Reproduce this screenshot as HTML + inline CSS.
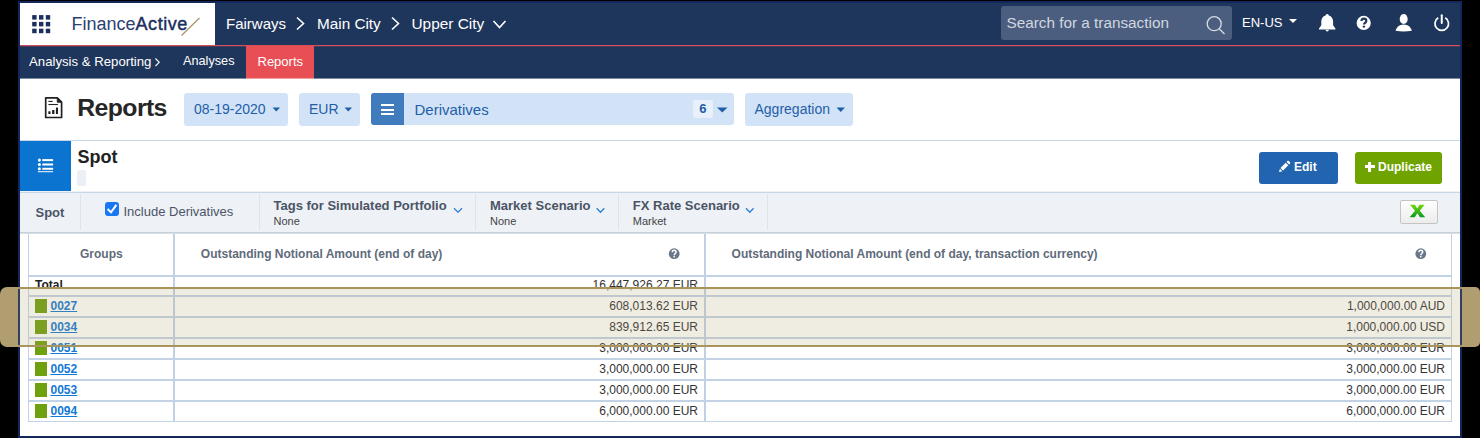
<!DOCTYPE html>
<html><head><meta charset="utf-8">
<style>
*{box-sizing:border-box;margin:0;padding:0}
html,body{width:1480px;height:438px;overflow:hidden;background:#000;font-family:"Liberation Sans",sans-serif}
.a{position:absolute}
.t{position:absolute;white-space:nowrap;line-height:1}
svg{position:absolute;overflow:visible}
</style></head><body>
<!-- frame -->
<div class="a" style="left:18px;top:1px;width:1444px;height:437px;background:#13275a"></div>
<div class="a" style="left:20px;top:3px;width:1440px;height:433px;background:#fff"></div>
<div class="a" style="left:215px;top:3px;width:1245px;height:42px;background:#1f365c"></div>
<div class="a" style="left:20px;top:46px;width:1440px;height:32px;background:#1f365c"></div>
<div class="a" style="left:20px;top:78px;width:1440px;height:1px;background:#7d8ba0"></div>
<div class="a" style="left:20px;top:45px;width:1440px;height:1px;background:#d4505a"></div>
<div class="a" style="left:20px;top:46px;width:1440px;height:1px;background:#4a3a5c"></div>

<!-- top header -->
<!-- grid icon -->
<svg style="left:0;top:0" width="60" height="45">
 <g fill="#1b2f5e">
  <rect x="32.2" y="15.1" width="4.4" height="4.5"/><rect x="39" y="15.1" width="4.4" height="4.5"/><rect x="45.8" y="15.1" width="4.4" height="4.5"/>
  <rect x="32.2" y="21.9" width="4.4" height="4.5"/><rect x="39" y="21.9" width="4.4" height="4.5"/><rect x="45.8" y="21.9" width="4.4" height="4.5"/>
  <rect x="32.2" y="28.7" width="4.4" height="4.5"/><rect x="39" y="28.7" width="4.4" height="4.5"/><rect x="45.8" y="28.7" width="4.4" height="4.5"/>
 </g>
</svg>
<div class="t" style="left:71.5px;top:14.8px;font-size:18px;color:#2a4173">Finance<span style="color:#1b2f5e;-webkit-text-stroke:0.45px #1b2f5e;letter-spacing:0.55px">Active</span></div>
<svg style="left:0;top:0" width="215" height="45"><line x1="181.5" y1="35.5" x2="199.5" y2="18" stroke="#a89466" stroke-width="1.2"/></svg>

<div class="t" style="left:226px;top:15.9px;font-size:15px;color:#fff">Fairways</div>
<svg style="left:0;top:0" width="520" height="45" fill="none" stroke="#fff" stroke-width="1.6">
 <polyline points="297,17.5 303.5,23.5 297,29.5"/>
 <polyline points="392,17.5 398.5,23.5 392,29.5"/>
 <polyline points="493.5,21 499.5,27.5 505.5,21"/>
</svg>
<div class="t" style="left:317px;top:15.7px;font-size:15.3px;color:#fff">Main City</div>
<div class="t" style="left:411.5px;top:15.7px;font-size:15.4px;color:#fff">Upper City</div>

<!-- search -->
<div class="a" style="left:1001px;top:6px;width:231px;height:34px;background:#4b5e80;border-radius:3px"></div>
<div class="t" style="left:1006.5px;top:15.2px;font-size:15.3px;color:#d2d7df">Search for a transaction</div>
<svg style="left:0;top:0" width="1240" height="45" fill="none" stroke="#d9dde3" stroke-width="1.3">
 <circle cx="1214.2" cy="23.7" r="7"/><line x1="1219.2" y1="28.7" x2="1224.5" y2="34"/>
</svg>
<div class="t" style="left:1242px;top:16px;font-size:13px;color:#fff">EN-US</div>
<svg style="left:0;top:0" width="1480" height="45" fill="#fff">
 <polygon points="1289,19 1297,19 1293,23"/>
 <!-- bell -->
 <path d="M1327.2 14c1 0 1.6.8 1.6 1.5 2.8.7 4.3 3.2 4.3 6.2v3.6l2.3 3.3v.9h-16.4v-.9l2.3-3.3v-3.6c0-3 1.5-5.5 4.3-6.2 0-.7.6-1.5 1.6-1.5z"/>
 <path d="M1325.6 29.8h3.2a1.6 1.6 0 0 1-3.2 0z"/>
 <!-- question -->
 <circle cx="1363.7" cy="22.9" r="7.1"/>
 <!-- user -->
 <ellipse cx="1403.7" cy="19" rx="4" ry="5.1"/>
 <path d="M1395.6 30.8c.6-3.6 4-6.4 8.1-6.4s7.5 2.8 8.1 6.4c-2.4.5-5.2.8-8.1.8s-5.7-.3-8.1-.8z"/>
</svg>
<svg style="left:0;top:0" width="1480" height="45" fill="none" stroke="#1f365c" stroke-width="2.2">
 <path d="M1361.5 21.1c0-1.5 1-2.4 2.4-2.4s2.4.9 2.4 2.2c0 1.8-2.3 1.9-2.3 3.5v.2"/>
</svg>
<svg style="left:0;top:0" width="1480" height="45" fill="#1f365c"><circle cx="1363.9" cy="26.6" r="1.2"/></svg>
<svg style="left:0;top:0" width="1480" height="45" fill="none" stroke="#fff" stroke-width="1.8">
 <path d="M1438.25 17.8A6.8 6.8 0 1 0 1445.25 17.8" stroke-width="1.7"/>
 <line x1="1441.75" y1="15.2" x2="1441.75" y2="23" stroke-width="2" stroke-linecap="round"/>
</svg>

<!-- nav bar -->
<div class="t" style="left:29px;top:55px;font-size:13.2px;color:#fff">Analysis &amp; Reporting</div>
<svg style="left:0;top:0" width="200" height="80" fill="none" stroke="#fff" stroke-width="1.1"><polyline points="155.5,58.5 159.2,62.3 155.5,66"/></svg>
<div class="t" style="left:183px;top:55.3px;font-size:12.7px;color:#fff">Analyses</div>
<div class="a" style="left:246px;top:46px;width:68px;height:32px;background:#e84f55"></div>
<div class="a" style="left:246px;top:78px;width:68px;height:1px;background:#f2a0a3"></div>
<div class="t" style="left:257.5px;top:55px;font-size:13px;color:#fff">Reports</div>


<!-- title bar -->
<svg style="left:0;top:0" width="70" height="125" fill="none" stroke="#222" stroke-width="1.7">
 <path d="M45.7 97.9h11.6l4.3 4.3v15.3h-15.9z" stroke-linejoin="round"/>
 <path d="M57.3 98v4.2h4.2z" fill="#222" stroke-width="1"/>
 <line x1="48.4" y1="101.4" x2="52.7" y2="101.4" stroke-width="1.1"/>
 <line x1="48.4" y1="104.5" x2="57.9" y2="104.5" stroke-width="1.1"/>
 <g fill="#222" stroke="none"><rect x="48.3" y="111.2" width="2.2" height="2.7" rx=".5"/><rect x="52.1" y="110" width="2.3" height="3.9" rx=".5"/><rect x="55.9" y="107.4" width="2.1" height="6.5" rx=".5"/></g>
</svg>
<div class="t" style="left:77.3px;top:95.6px;font-size:24.8px;font-weight:700;color:#262626;letter-spacing:-0.6px">Reports</div>

<div class="a" style="left:184px;top:93px;width:104px;height:33px;background:#d3e3f7;border-radius:3px"></div>
<div class="t" style="left:194px;top:102px;font-size:14px;color:#1f5ea8">08-19-2020</div>
<div class="a" style="left:299px;top:93px;width:61px;height:33px;background:#d3e3f7;border-radius:3px"></div>
<div class="t" style="left:309px;top:102px;font-size:14px;color:#1f5ea8">EUR</div>
<div class="a" style="left:371px;top:93px;width:363px;height:32px;background:#d3e3f7;border-radius:3px"></div>
<div class="a" style="left:371px;top:93px;width:33px;height:32px;background:#3f7bbd;border-radius:3px 0 0 3px"></div>
<div class="a" style="left:381px;top:104px;width:13px;height:2.2px;background:#fff"></div>
<div class="a" style="left:381px;top:108.5px;width:13px;height:2.2px;background:#fff"></div>
<div class="a" style="left:381px;top:113px;width:13px;height:2.2px;background:#fff"></div>
<div class="t" style="left:414.5px;top:102px;font-size:15px;color:#1f5ea8">Derivatives</div>
<div class="a" style="left:693px;top:100px;width:20px;height:18px;background:#e8f0fb;border-radius:2px"></div>
<div class="t" style="left:699.3px;top:101.6px;font-size:13px;font-weight:700;color:#1f5ea8">6</div>
<div class="a" style="left:745px;top:93px;width:108px;height:33px;background:#d3e3f7;border-radius:3px"></div>
<div class="t" style="left:754.5px;top:102px;font-size:14px;color:#1f5ea8">Aggregation</div>
<svg style="left:0;top:0" width="860" height="125" fill="#1f5ea8">
 <polygon points="272.5,107.5 280,107.5 276.25,111.5"/>
 <polygon points="344.5,107.5 352,107.5 348.25,111.5"/>
 <polygon points="717,107.5 727.5,107.5 722.25,112.5"/>
 <polygon points="836.5,107.5 845,107.5 840.75,112"/>
</svg>
<div class="a" style="left:20px;top:140px;width:1440px;height:1px;background:#c8d7e8"></div>

<!-- spot header -->
<div class="a" style="left:20px;top:141px;width:51px;height:50px;background:#0a74d0"></div>
<svg style="left:0;top:0" width="70" height="190" fill="#fff">
 <circle cx="39.4" cy="160.1" r="1.55"/><circle cx="39.4" cy="164.5" r="1.55"/><circle cx="39.4" cy="168.8" r="1.55"/>
 <rect x="42.3" y="159.1" width="10.8" height="2"/><rect x="42.3" y="163.5" width="10.8" height="2"/><rect x="42.3" y="167.8" width="10.8" height="2"/>
 <rect x="37.9" y="171.2" width="15.2" height="1"/>
</svg>
<div class="t" style="left:77.5px;top:147.9px;font-size:18px;font-weight:700;color:#222">Spot</div>
<div class="a" style="left:77px;top:170px;width:9px;height:16px;background:#eceff5;border-radius:2px"></div>
<div class="a" style="left:1259px;top:152px;width:79px;height:32px;background:#2264b0;border-radius:3px"></div>
<svg style="left:0;top:0" width="1300" height="190" fill="#fff">
 <path d="M1280.5 167.9l5.2-5.2 2.6 2.6-5.2 5.2z M1279.9 168.7l2.5 2.5-3.4.9z M1286.5 162l.9-.9c.4-.4 1-.4 1.4 0l1.2 1.2c.4.4.4 1 0 1.4l-.9.9z"/>
</svg>
<div class="t" style="left:1294px;top:160.8px;font-size:12px;font-weight:700;color:#fff">Edit</div>
<div class="a" style="left:1355px;top:152px;width:87px;height:32px;background:#6ea300;border-radius:3px"></div>
<div class="a" style="left:1365px;top:165.3px;width:9.5px;height:2.8px;background:#fff"></div>
<div class="a" style="left:1368.3px;top:162px;width:2.8px;height:9.5px;background:#fff"></div>
<div class="t" style="left:1378px;top:160.8px;font-size:12px;font-weight:700;color:#fff">Duplicate</div>

<!-- filter bar -->
<div class="a" style="left:20px;top:191px;width:1440px;height:42px;background:#eef1f6"></div>
<div class="a" style="left:20px;top:191.5px;width:1440px;height:1px;background:#c8d7e8"></div>
<div class="a" style="left:20px;top:232px;width:1440px;height:1px;background:#c3d2df"></div>
<div class="a" style="left:20px;top:233px;width:1440px;height:1px;background:#dcdddf"></div>
<div class="a" style="left:80px;top:194px;width:1px;height:35.5px;background:#e0e3e8"></div>
<div class="a" style="left:259px;top:194px;width:1px;height:35.5px;background:#e0e3e8"></div>
<div class="a" style="left:475px;top:194px;width:1px;height:35.5px;background:#e0e3e8"></div>
<div class="a" style="left:618px;top:194px;width:1px;height:35.5px;background:#e0e3e8"></div>
<div class="a" style="left:767px;top:194px;width:1px;height:35.5px;background:#e0e3e8"></div>
<div class="t" style="left:35.5px;top:206.2px;font-size:13px;font-weight:700;color:#4a5566">Spot</div>
<div class="a" style="left:105px;top:202px;width:14px;height:14px;background:#1877f2;border-radius:3px"></div>
<svg style="left:0;top:0" width="130" height="220" fill="none" stroke="#fff" stroke-width="2"><polyline points="107.6,209 111,212.3 116.4,204.8"/></svg>
<div class="t" style="left:123.5px;top:204.7px;font-size:13px;color:#4a5566">Include Derivatives</div>
<div class="t" style="left:273.5px;top:198.7px;font-size:13px;font-weight:700;color:#4a5566">Tags for Simulated Portfolio</div>
<div class="t" style="left:273.5px;top:215.5px;font-size:11px;color:#444">None</div>
<div class="t" style="left:490px;top:198.7px;font-size:13px;font-weight:700;color:#4a5566">Market Scenario</div>
<div class="t" style="left:490px;top:215.5px;font-size:11px;color:#444">None</div>
<div class="t" style="left:632.8px;top:198.7px;font-size:13px;font-weight:700;color:#4a5566">FX Rate Scenario</div>
<div class="t" style="left:632.8px;top:215.5px;font-size:11px;color:#444">Market</div>
<svg style="left:0;top:0" width="800" height="230" fill="none" stroke="#2a7fd4" stroke-width="1.3">
 <polyline points="454,208.3 458,212.2 462,208.3"/>
 <polyline points="596.7,208.3 600.5,212.2 604.3,208.3"/>
 <polyline points="746,208.3 749.8,212.2 753.6,208.3"/>
</svg>
<div class="a" style="left:1400px;top:200px;width:38px;height:23.5px;background:linear-gradient(#fff,#ececec);border:1px solid #c4c4c4;border-radius:2px"></div>
<svg style="left:0;top:0" width="1450" height="230">
 <defs><linearGradient id="xg" x1="0" y1="0" x2="0" y2="1"><stop offset="0" stop-color="#72d80c"/><stop offset="1" stop-color="#0c9a22"/></linearGradient></defs>
 <path d="M1410 204.8h5l2.2 3.6 2.2-3.6h5.2l-4.8 6 5.4 6.4h-5.2l-2.6-4-2.6 4h-5.2l5.4-6.4z" fill="url(#xg)"/>
</svg>


<!-- table -->
<div class="a" style="left:28px;top:234px;width:1.3px;height:188px;background:#c5d3e3"></div>
<div class="a" style="left:1451px;top:234px;width:1.3px;height:188px;background:#c5d3e3"></div>
<div class="a" style="left:173px;top:234px;width:2px;height:188px;background:#c0d1e5"></div>
<div class="a" style="left:704px;top:234px;width:2px;height:188px;background:#c0d1e5"></div>
<div class="a" style="left:28px;top:275px;width:1424px;height:1.6px;background:#c3d3e6"></div>
<div class="a" style="left:28px;top:295px;width:1424px;height:1.6px;background:#c3d3e6"></div>
<div class="a" style="left:28px;top:316px;width:1424px;height:1.6px;background:#c3d3e6"></div>
<div class="a" style="left:28px;top:337px;width:1424px;height:1.6px;background:#c3d3e6"></div>
<div class="a" style="left:28px;top:358px;width:1424px;height:1.6px;background:#c3d3e6"></div>
<div class="a" style="left:28px;top:379px;width:1424px;height:1.6px;background:#c3d3e6"></div>
<div class="a" style="left:28px;top:400px;width:1424px;height:1.6px;background:#c3d3e6"></div>
<div class="a" style="left:28px;top:420.5px;width:1424px;height:1.6px;background:#c3d3e6"></div>
<div class="t" style="left:80px;top:247.8px;font-size:12px;font-weight:700;color:#5f6b7a">Groups</div>
<div class="t" style="left:200.8px;top:248.1px;font-size:12px;font-weight:700;color:#5f6b7a">Outstanding Notional Amount (end of day)</div>
<div class="t" style="left:731.6px;top:248.1px;font-size:12px;font-weight:700;color:#5f6b7a">Outstanding Notional Amount (end of day, transaction currency)</div>
<svg style="left:0;top:0" width="1480" height="270"><circle cx="674.2" cy="253.7" r="5.4" fill="#69778a"/><path d="M672.30 252.3c0-1.2.8-2 1.9-2s1.9.7 1.9 1.8c0 1.4-1.8 1.4-1.8 2.9v.3" fill="none" stroke="#fff" stroke-width="1.5"/><circle cx="674.20" cy="256.6" r="0.85" fill="#fff"/></svg>
<svg style="left:0;top:0" width="1480" height="270"><circle cx="1420.8" cy="253.7" r="5.4" fill="#69778a"/><path d="M1418.90 252.3c0-1.2.8-2 1.9-2s1.9.7 1.9 1.8c0 1.4-1.8 1.4-1.8 2.9v.3" fill="none" stroke="#fff" stroke-width="1.5"/><circle cx="1420.80" cy="256.6" r="0.85" fill="#fff"/></svg>
<div class="t" style="left:35px;top:278.8px;font-size:12px;font-weight:700;color:#222">Total</div>
<div class="t" style="right:782px;top:278.8px;font-size:12px;color:#333">16,447,926.27 EUR</div>
<div class="a" style="left:35px;top:298.9px;width:12px;height:13.8px;background:#6fa10e"></div>
<div class="t" style="left:50.5px;top:299.84px;font-size:12px;font-weight:700;color:#1279d6;text-decoration:underline">0027</div>
<div class="t" style="right:782px;top:299.84px;font-size:12px;color:#333">608,013.62 EUR</div>
<div class="t" style="right:35px;top:299.84px;font-size:12px;color:#333">1,000,000.00 AUD</div>
<div class="a" style="left:35px;top:319.9px;width:12px;height:13.8px;background:#6fa10e"></div>
<div class="t" style="left:50.5px;top:320.84px;font-size:12px;font-weight:700;color:#1279d6;text-decoration:underline">0034</div>
<div class="t" style="right:782px;top:320.84px;font-size:12px;color:#333">839,912.65 EUR</div>
<div class="t" style="right:35px;top:320.84px;font-size:12px;color:#333">1,000,000.00 USD</div>
<div class="a" style="left:35px;top:340.9px;width:12px;height:13.8px;background:#6fa10e"></div>
<div class="t" style="left:50.5px;top:341.84px;font-size:12px;font-weight:700;color:#1279d6;text-decoration:underline">0051</div>
<div class="t" style="right:782px;top:341.84px;font-size:12px;color:#333">3,000,000.00 EUR</div>
<div class="t" style="right:35px;top:341.84px;font-size:12px;color:#333">3,000,000.00 EUR</div>
<div class="a" style="left:35px;top:361.9px;width:12px;height:13.8px;background:#6fa10e"></div>
<div class="t" style="left:50.5px;top:362.84px;font-size:12px;font-weight:700;color:#1279d6;text-decoration:underline">0052</div>
<div class="t" style="right:782px;top:362.84px;font-size:12px;color:#333">3,000,000.00 EUR</div>
<div class="t" style="right:35px;top:362.84px;font-size:12px;color:#333">3,000,000.00 EUR</div>
<div class="a" style="left:35px;top:382.9px;width:12px;height:13.8px;background:#6fa10e"></div>
<div class="t" style="left:50.5px;top:383.84px;font-size:12px;font-weight:700;color:#1279d6;text-decoration:underline">0053</div>
<div class="t" style="right:782px;top:383.84px;font-size:12px;color:#333">3,000,000.00 EUR</div>
<div class="t" style="right:35px;top:383.84px;font-size:12px;color:#333">3,000,000.00 EUR</div>
<div class="a" style="left:35px;top:403.9px;width:12px;height:13.8px;background:#6fa10e"></div>
<div class="t" style="left:50.5px;top:404.84px;font-size:12px;font-weight:700;color:#1279d6;text-decoration:underline">0094</div>
<div class="t" style="right:782px;top:404.84px;font-size:12px;color:#333">6,000,000.00 EUR</div>
<div class="t" style="right:35px;top:404.84px;font-size:12px;color:#333">6,000,000.00 EUR</div>

<!-- highlight overlay -->
<div class="a" style="left:0;top:287px;width:18px;height:60px;background:#b09e70;border-radius:7px 0 0 7px"></div>
<div class="a" style="left:1462px;top:287px;width:18px;height:60px;background:#b09e70;border-radius:0 5px 5px 0"></div>
<div class="a" style="left:18px;top:287px;width:1444px;height:60px;background:rgba(176,158,112,0.2);border-top:2px solid #a8955e;border-bottom:2px solid #a8955e"></div>

</body></html>
